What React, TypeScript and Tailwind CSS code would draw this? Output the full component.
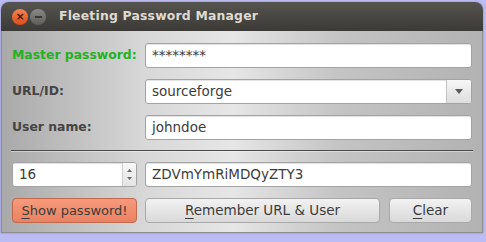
import React from "react";

const inputCls =
  "h-[25px] rounded-[3px] border border-[#a3a3a3] bg-white shadow-[inset_0_1px_1px_rgba(0,0,0,0.12)] px-[6px] flex items-center text-[13.5px] text-[#3c3c3c]";

function Field({ value }: { value: string }) {
  return <div className={inputCls}>{value}</div>;
}

function Label({ text, green }: { text: string; green?: boolean }) {
  return (
    <div className={`h-[25px] flex items-center font-bold text-[12.4px] ${green ? "text-[#1fb31f]" : "text-[#444444]"}`}>
      {text}
    </div>
  );
}

function Mnemonic({ first, rest }: { first: string; rest: string }) {
  return (
    <span>
      <span className="underline underline-offset-[3px] decoration-1">{first}</span>
      {rest}
    </span>
  );
}

export default function App() {
  return (
    <div
      className="w-[486px] h-[242px] bg-[#bcbcf4] pt-[2px] pl-[1px] overflow-hidden"
      style={{ fontFamily: '"DejaVu Sans", "Noto Sans", sans-serif' }}
    >
      <div className="w-[482px] rounded-t-[8px] overflow-hidden shadow-[0_0_2px_rgba(0,0,0,0.35)]">
        {/* title bar */}
        <div className="h-[29px] bg-gradient-to-b from-[#55544f] to-[#3b3a36] flex items-center pl-[11px]">
          <div className="w-[16px] h-[16px] rounded-full bg-gradient-to-b from-[#f5824f] to-[#dc4b17] flex items-center justify-center text-[#3a1a0a] text-[11px] leading-none font-bold">
            ×
          </div>
          <div className="ml-[2px] w-[16px] h-[16px] rounded-full bg-gradient-to-b from-[#8a8984] to-[#5f5e5a] flex items-center justify-center">
            <div className="w-[7px] h-[2px] bg-[#3a3936]" />
          </div>
          <div className="ml-[13px] text-[#dfdbd2] font-bold text-[12.4px] tracking-[0.2px]">
            Fleeting Password Manager
          </div>
        </div>
        {/* body */}
        <div className="h-[202px] border-x border-b border-[#8f8f8f] bg-[linear-gradient(90deg,#a9a9a9_0%,#d8d8d8_30%,#e6e6e6_48%,#c4c4c4_70%,#b2b2b2_100%)] px-[10px] pt-[12px] flex flex-col">
          <div className="grid grid-cols-[133px_1fr] gap-x-0 gap-y-[11px]">
            <Label text="Master password:" green />
            <Field value="********" />
            <Label text="URL/ID:" />
            <div className="h-[25px] flex rounded-[3px] border border-[#a3a3a3] bg-white overflow-hidden">
              <div className="flex-1 flex items-center px-[6px] text-[13.5px] text-[#3c3c3c] shadow-[inset_0_1px_1px_rgba(0,0,0,0.12)]">
                sourceforge
              </div>
              <div className="w-[25px] border-l border-[#c4c4c4] bg-gradient-to-b from-[#f6f6f6] to-[#dedede] flex items-center justify-center">
                <svg width="8" height="5" viewBox="0 0 8 5">
                  <path d="M0 0 L8 0 L4 5 Z" fill="#5a5a5a" />
                </svg>
              </div>
            </div>
            <Label text="User name:" />
            <Field value="johndoe" />
          </div>
          <div className="mt-[10px] h-[1px] bg-[#4a4a4a] mx-[-1px] shadow-[0_1px_0_rgba(255,255,255,0.4)]" />
          <div className="mt-[11px] grid grid-cols-[125px_1fr] gap-x-[8px]">
            <div className="h-[25px] flex rounded-[3px] border border-[#a3a3a3] bg-white overflow-hidden">
              <div className="flex-1 flex items-center px-[6px] text-[13.5px] text-[#3c3c3c] shadow-[inset_0_1px_1px_rgba(0,0,0,0.12)]">
                16
              </div>
              <div className="w-[14px] border-l border-[#d0d0d0] bg-gradient-to-b from-[#f8f8f8] to-[#e4e4e4] flex flex-col items-center justify-center gap-[5px]">
                <svg width="5" height="3" viewBox="0 0 5 3">
                  <path d="M0 3 L5 3 L2.5 0 Z" fill="#6a6a6a" />
                </svg>
                <svg width="5" height="3" viewBox="0 0 5 3">
                  <path d="M0 0 L5 0 L2.5 3 Z" fill="#6a6a6a" />
                </svg>
              </div>
            </div>
            <Field value="ZDVmYmRiMDQyZTY3" />
          </div>
          <div className="mt-[11px] flex gap-[8px]">
            <button className="w-[125px] h-[25px] rounded-[4px] border border-[#c0694c] bg-gradient-to-b from-[#f69a7b] to-[#ea8262] text-[13px] text-[#3c3c3c] flex items-center justify-center">
              <Mnemonic first="S" rest="how password!" />
            </button>
            <button className="w-[235px] h-[25px] rounded-[4px] border border-[#a9a9a9] bg-gradient-to-b from-[#f2f2f2] to-[#d9d9d9] text-[13.5px] text-[#3c3c3c] flex items-center justify-center">
              <Mnemonic first="R" rest="emember URL & User" />
            </button>
            <button className="flex-1 ml-[1px] h-[25px] rounded-[4px] border border-[#a9a9a9] bg-gradient-to-b from-[#f2f2f2] to-[#d9d9d9] text-[13.5px] text-[#3c3c3c] flex items-center justify-center">
              <Mnemonic first="C" rest="lear" />
            </button>
          </div>
        </div>
      </div>
    </div>
  );
}
